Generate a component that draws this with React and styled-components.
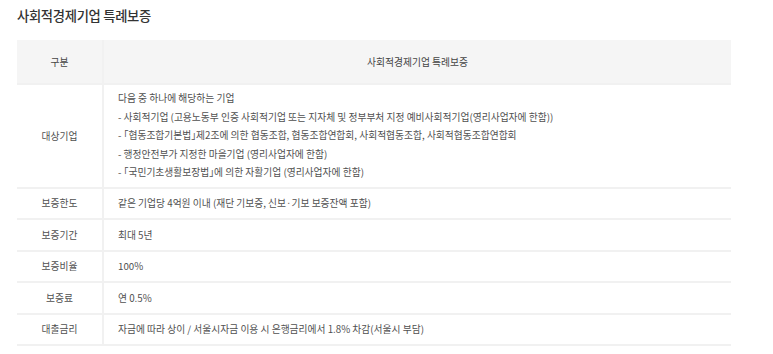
import React from 'react';
import styled, { createGlobalStyle } from 'styled-components';

const GlobalStyle = createGlobalStyle`
  body {
    margin: 0;
    background: #fff;
    font-family: "Noto Sans CJK KR", "Noto Sans", sans-serif;
  }
`;

const ROWS = [
  { id: 1, label: '보증한도', text: '같은 기업당 4억원 이내 (재단 기보증, 신보·기보 보증잔액 포함)' },
  { id: 2, label: '보증기간', text: '최대 5년' },
  { id: 3, label: '보증비율', text: '100%' },
  { id: 4, label: '보증료', text: '연 0.5%' },
  { id: 5, label: '대출금리', text: '자금에 따라 상이 / 서울시자금 이용 시 은행금리에서 1.8% 차감(서울시 부담)' },
];

const App = () => {
  return (
    <Wrapper>
      <GlobalStyle />
      <Title>사회적경제기업 특례보증</Title>
      <Table>
        <colgroup>
          <col style={{ width: 86 }} />
          <col />
        </colgroup>
        <thead>
          <tr>
            <HeadCell>구분</HeadCell>
            <HeadCell>사회적경제기업 특례보증</HeadCell>
          </tr>
        </thead>
        <tbody>
          <tr>
            <LabelCell>대상기업</LabelCell>
            <BodyCell tall>
              <Line>다음 중 하나에 해당하는 기업</Line>
              <Line>- 사회적기업 (고용노동부 인증 사회적기업 또는 지자체 및 정부부처 지정 예비사회적기업(영리사업자에 한함))</Line>
              <Line>- 「협동조합기본법」제2조에 의한 협동조합, 협동조합연합회, 사회적협동조합, 사회적협동조합연합회</Line>
              <Line>- 행정안전부가 지정한 마을기업 (영리사업자에 한함)</Line>
              <Line>- 「국민기초생활보장법」에 의한 자활기업 (영리사업자에 한함)</Line>
            </BodyCell>
          </tr>
          {ROWS.map(row => (
            <tr key={row.id}>
              <LabelCell>{row.label}</LabelCell>
              <BodyCell>{row.text}</BodyCell>
            </tr>
          ))}
        </tbody>
      </Table>
    </Wrapper>
  );
};

const Wrapper = styled.div`
  padding: 6px 0 0 17px;
  width: 714px;
`;

const Title = styled.h2`
  margin: 0 0 14px;
  font-size: 13.3px;
  font-weight: 500;
  color: #333;
  letter-spacing: -0.3px;
  line-height: 20px;
`;

const Table = styled.table`
  width: 714px;
  border-collapse: collapse;
  table-layout: fixed;
  font-size: 9.75px;
  color: #505050;
  font-feature-settings: "halt";
`;

const HeadCell = styled.th`
  height: 43px;
  padding: 0;
  background: #f5f5f5;
  font-weight: 400;
  color: #444;
  text-align: center;
  border-bottom: 2px solid #f1f1f1;
  border-right: 2px solid #f1f1f1;

  &:last-child {
    border-right: none;
  }
`;

const LabelCell = styled.td`
  padding: 0;
  text-align: center;
  border-bottom: 2px solid #f1f1f1;
  border-right: 2px solid #f1f1f1;
`;

const BodyCell = styled.td`
  height: ${props => (props.tall ? 'auto' : '29.5px')};
  padding: ${props => (props.tall ? '4px 14px 5px' : '0 14px')};
  border-bottom: 2px solid #f1f1f1;
`;

const Line = styled.div`
  line-height: 18.5px;
`;

export default App;
